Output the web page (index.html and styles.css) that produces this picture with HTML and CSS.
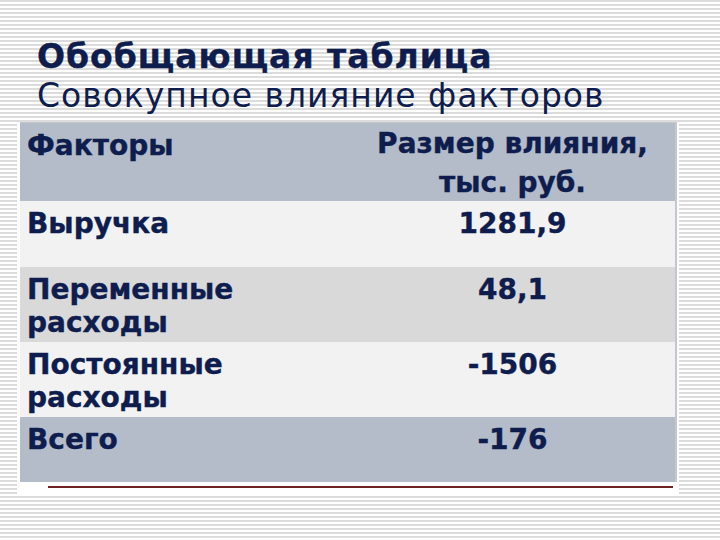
FILE: index.html
```html
<!DOCTYPE html>
<html lang="ru">
<head>
<meta charset="utf-8">
<link rel="stylesheet" href="styles.css">
</head>
<body>
<div class="slide">
  <div class="heading">
    <div class="title">Обобщающая таблица</div>
    <div class="subtitle">Совокупное влияние факторов</div>
  </div>
  <div class="table-wrap">
    <div class="table">
      <div class="row head">
        <div class="cell name">Факторы</div>
        <div class="cell value head-value">Размер влияния,<br>тыс. руб.</div>
      </div>
      <div class="row r1">
        <div class="cell name">Выручка</div>
        <div class="cell value">1281,9</div>
      </div>
      <div class="row r2">
        <div class="cell name">Переменные<br>расходы</div>
        <div class="cell value">48,1</div>
      </div>
      <div class="row r3">
        <div class="cell name">Постоянные<br>расходы</div>
        <div class="cell value">-1506</div>
      </div>
      <div class="row r4">
        <div class="cell name">Всего</div>
        <div class="cell value">-176</div>
      </div>
    </div>
    <div class="rule"></div>
  </div>
</div>
</body>
</html>
```

FILE: styles.css
```css
html, body {
  margin: 0;
  padding: 0;
}

.slide {
  width: 720px;
  height: 540px;
  overflow: hidden;
  background: repeating-linear-gradient(to bottom, #dcdcdc 0px, #dcdcdc 2px, #ffffff 2px, #ffffff 4px);
  color: #0e1d4e;
  font-family: "DejaVu Sans", Verdana, sans-serif;
}

.heading {
  padding: 38px 0 0 37px;
  height: 122px;
  box-sizing: border-box;
}

.title {
  font-weight: bold;
  font-size: 33px;
  letter-spacing: 1px;
  line-height: 38px;
  height: 38px;
  -webkit-text-stroke: 0.4px #0e1d4e;
}

.subtitle {
  font-size: 33px;
  letter-spacing: 1px;
  line-height: 39px;
}

.table-wrap {
  margin-left: 17px;
  width: 662px;
  background: #ffffff;
  padding-bottom: 8px;
}

.table {
  margin-left: 3px;
  width: 657px;
  box-sizing: border-box;
  border-right: 2px solid #c4c8ce;
  border-top: 1px solid #c4c8ce;
}

.row {
  display: grid;
  grid-template-columns: 330px 1fr;
  font-weight: bold;
  font-size: 28px;
  line-height: 33px;
  -webkit-text-stroke: 0.4px #0e1d4e;
}

.cell {
  padding-top: 6px;
}

.name {
  padding-left: 7px;
}

.value {
  text-align: center;
}

.head-value {
  line-height: 39px;
  padding-top: 1px;
}

.head { height: 78px; background: #b3bcc8; }
.r1 { height: 66px; background: #f2f2f2; }
.r2 { height: 75px; background: #d9d9d9; }
.r3 { height: 75px; background: #f2f2f2; }
.r4 { height: 65px; background: #b3bcc8; }

.rule {
  margin: 4px 0 0 31px;
  width: 625px;
  height: 2px;
  background: #6e2222;
}
```
